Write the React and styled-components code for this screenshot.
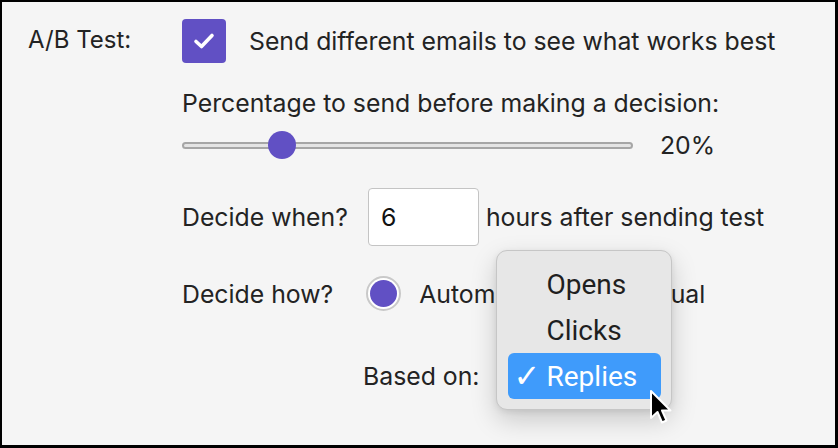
import React from 'react';
import styled, { createGlobalStyle } from 'styled-components';

const GlobalStyle = createGlobalStyle`
  html, body {
    margin: 0;
    padding: 0;
    background: #000;
  }
  * { box-sizing: border-box; }
`;

const purple = '#6150c4';

const Frame = styled.div`
  width: 838px;
  height: 448px;
  border: 2px solid #000;
  border-right-width: 3px;
  border-bottom-width: 3px;
  background: #f5f5f5;
  overflow: hidden;
  font-family: Inter, Roboto, "Liberation Sans", sans-serif;
  font-size: 24.8px;
  color: #232323;
`;

const Form = styled.div`
  display: grid;
  grid-template-columns: 154px 1fr;
  padding: 17px 0 0 26px;
`;

const Label = styled.div`
  height: 44px;
  line-height: 44px;
  margin-top: -1px;
  font-size: 24px;
`;

const Column = styled.div`
  display: flex;
  flex-direction: column;
`;

const Row = styled.div`
  display: flex;
  align-items: center;
  margin-top: ${p => p.$top || 0}px;
  padding-left: ${p => p.$indent || 0}px;
  gap: ${p => p.$gap || 0}px;
  height: ${p => p.$h}px;
`;

const Text = styled.span`
  line-height: 28px;
  white-space: nowrap;
`;

const CheckBox = styled.div`
  width: 44px;
  height: 44px;
  border-radius: 4px;
  background: ${purple};
  display: flex;
  align-items: center;
  justify-content: center;
  flex: none;
`;

const Range = styled.input`
  -webkit-appearance: none;
  appearance: none;
  width: 451px;
  height: 28px;
  margin: 0;
  background: transparent;
  &::-webkit-slider-runnable-track {
    height: 7px;
    border-radius: 4px;
    background: #e4e4e4;
    border: 2px solid #a6a6a6;
  }
  &::-webkit-slider-thumb {
    -webkit-appearance: none;
    width: 28px;
    height: 28px;
    margin-top: -12.5px;
    border-radius: 50%;
    background: ${purple};
    border: none;
  }
`;

const NumberBox = styled.div`
  width: 111px;
  height: 58px;
  border: 1.5px solid #c4c4c4;
  border-radius: 4px;
  background: #fff;
  padding-left: 12px;
  display: flex;
  align-items: center;
  color: #111;
`;

const Radio = styled.span`
  width: 35px;
  height: 35px;
  border-radius: 50%;
  border: 2px solid #c9c9c9;
  background: #fff;
  display: flex;
  align-items: center;
  justify-content: center;
  flex: none;
  &::after {
    content: '';
    width: 27px;
    height: 27px;
    border-radius: 50%;
    background: ${p => (p.$on ? purple : 'transparent')};
  }
`;

const SelectWrap = styled.div`
  position: relative;
  width: 176px;
  height: 36px;
`;

const Menu = styled.div`
  position: absolute;
  left: 0;
  top: -108px;
  width: 176px;
  padding: 10px 10px 10px 11px;
  background: #e7e7e7;
  border: 1px solid #c6c6c6;
  border-radius: 11px;
  box-shadow: 0 10px 26px rgba(0, 0, 0, 0.18), 0 2px 6px rgba(0, 0, 0, 0.08);
  font-family: Roboto, "Liberation Sans", sans-serif;
  font-size: 28px;
  z-index: 2;
`;

const MenuItem = styled.div`
  height: 46px;
  display: flex;
  align-items: center;
  border-radius: 6px;
  padding-left: 6px;
  background: ${p => (p.$active ? '#3f9bfb' : 'transparent')};
  color: ${p => (p.$active ? '#fff' : '#1f1f1f')};
`;

const Tick = styled.span`
  width: 33px;
  flex: none;
  font-size: 32px;
  font-family: "DejaVu Sans", sans-serif;
`;

const Cursor = styled.svg`
  position: absolute;
  left: 153px;
  top: 31px;
  z-index: 3;
`;

export default function App() {
  const options = ['Opens', 'Clicks', 'Replies'];
  return (
    <>
      <GlobalStyle />
      <Frame>
        <Form>
          <Label>A/B Test:</Label>
          <Column>
            <Row $h={44} $gap={23}>
              <CheckBox>
                <svg width="22" height="18" viewBox="0 0 22 18">
                  <path d="M3 9.5 L8.5 14.5 L19 3.5" fill="none" stroke="#fff" strokeWidth="3.6" strokeLinecap="round" strokeLinejoin="round" />
                </svg>
              </CheckBox>
              <Text>Send different emails to see what works best</Text>
            </Row>
            <Row $h={28} $top={26}>
              <Text>Percentage to send before making a decision:</Text>
            </Row>
            <Row $h={28} $top={14} $gap={27}>
              <Range type="range" min="0" max="100" defaultValue="20" />
              <Text>20%</Text>
            </Row>
            <Row $h={58} $top={29} $gap={20}>
              <Text>Decide when?</Text>
              <NumberBox>6</NumberBox>
              <Text style={{ marginLeft: -13 }}>hours after sending test</Text>
            </Row>
            <Row $h={35} $top={30} $gap={18}>
              <Text style={{ marginRight: 15 }}>Decide how?</Text>
              <Radio $on />
              <Text>Automatic</Text>
              <Radio style={{ marginLeft: 11 }} />
              <Text>Manual</Text>
            </Row>
            <Row $h={36} $top={47} $indent={181} $gap={16}>
              <Text>Based on:</Text>
              <SelectWrap>
                <Menu>
                  {options.map(o => (
                    <MenuItem key={o} $active={o === 'Replies'}>
                      <Tick>{o === 'Replies' ? '✓' : ''}</Tick>
                      {o}
                    </MenuItem>
                  ))}
                </Menu>
                <Cursor width="24" height="38" viewBox="0 0 24 38">
                  <path d="M2 2 L2 29 L8.5 23 L13 33.5 L17.5 31.5 L13 21.5 L21.5 21.5 Z" fill="#000" stroke="#fff" strokeWidth="2" strokeLinejoin="round" />
                </Cursor>
              </SelectWrap>
            </Row>
          </Column>
        </Form>
      </Frame>
    </>
  );
}
